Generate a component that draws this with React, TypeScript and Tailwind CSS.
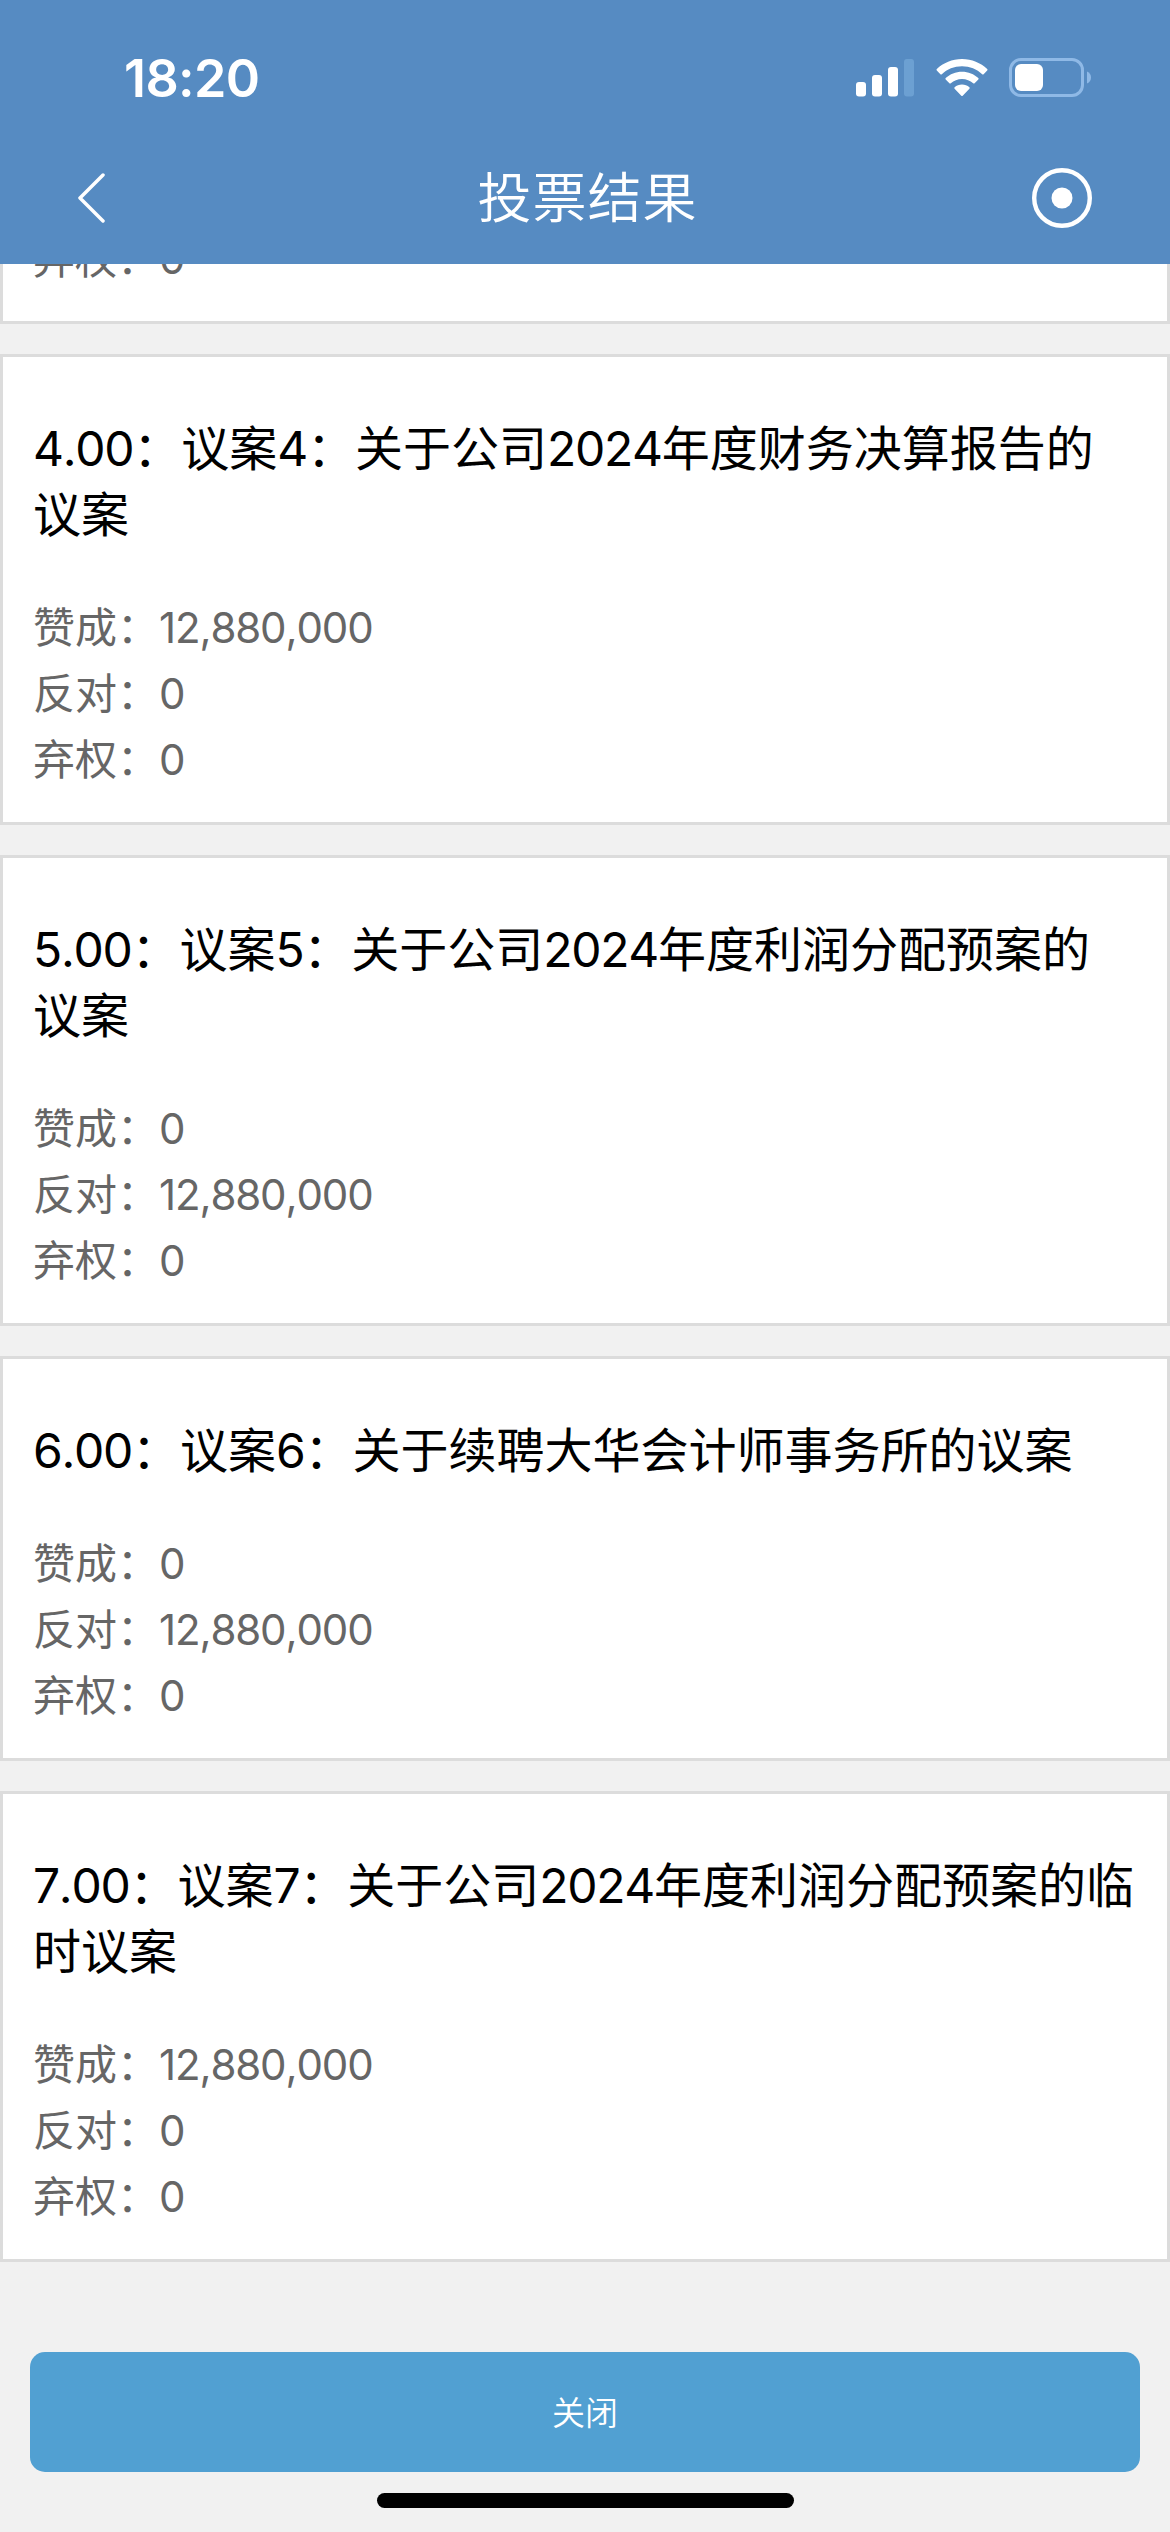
interface Proposal {
  no: string;
  index: string;
  // the title is broken into lines where it wraps on the device
  title: string;
  agree: string;
  against: string;
  abstain: string;
}

const proposals: Proposal[] = [
  {
    no: "4.00",
    index: "4",
    title: "关于公司2024年度财务决算报告的\n议案",
    agree: "12,880,000",
    against: "0",
    abstain: "0",
  },
  {
    no: "5.00",
    index: "5",
    title: "关于公司2024年度利润分配预案的\n议案",
    agree: "0",
    against: "12,880,000",
    abstain: "0",
  },
  {
    no: "6.00",
    index: "6",
    title: "关于续聘大华会计师事务所的议案",
    agree: "0",
    against: "12,880,000",
    abstain: "0",
  },
  {
    no: "7.00",
    index: "7",
    title: "关于公司2024年度利润分配预案的临\n时议案",
    agree: "12,880,000",
    against: "0",
    abstain: "0",
  },
];

function StatusBar() {
  return (
    <div className="flex h-[132px] items-start justify-between pt-[58px] pr-[78px] pl-[124px] text-white">
      <span className="font-['Inter',sans-serif] text-[52px] leading-[41px] font-semibold tracking-[-0.6px]">
        18:20
      </span>
      <div className="flex items-start">
        <svg width="58" height="40" viewBox="0 0 58 40" fill="currentColor">
          <rect x="0" y="24" width="10" height="14.5" rx="3" />
          <rect x="16" y="17" width="10" height="21.5" rx="3" />
          <rect x="32" y="9" width="10" height="29.5" rx="3" />
          <rect x="48" y="1" width="10" height="37.5" rx="3" fill="#8fc0ea" opacity="0.4" />
        </svg>
        <svg className="ml-[22px]" width="52" height="40" viewBox="0 0 52 40" fill="currentColor">
          <path d="M26 1C35.800 1 44.700 4.800 51.200 11.100Q51.900 11.800 51.200 12.500L47.600 16.200Q46.900 16.900 46.200 16.200C40.900 11.200 33.800 8.300 26 8.300S11.100 11.200 5.800 16.200Q5.100 16.900 4.400 16.200L0.800 12.500Q0.100 11.800 0.800 11.100C7.300 4.800 16.200 1 26 1Z" />
          <path d="M26 13.800C32.300 13.800 38 16.200 42.300 20.100Q43 20.800 42.300 21.500L38.600 25.200Q37.900 25.900 37.200 25.300C34.200 22.600 30.300 21 26 21S17.800 22.600 14.800 25.300Q14.100 25.900 13.400 25.200L9.700 21.500Q9 20.800 9.700 20.100C14 16.200 19.700 13.800 26 13.800Z" />
          <path d="M26 26.600C28.800 26.600 31.400 27.600 33.400 29.300Q34.100 30 33.400 30.700L26.700 37.700Q26 38.400 25.300 37.700L18.600 30.700Q17.900 30 18.600 29.300C20.600 27.600 23.200 26.600 26 26.600Z" />
        </svg>
        <svg className="ml-[21px]" width="83" height="40" viewBox="0 0 83 40">
          <rect x="1.500" y="1.500" width="72" height="36" rx="10.500" fill="none" stroke="#8fb9e6" strokeWidth="3" />
          <rect x="6" y="6" width="28" height="27" rx="6" fill="#fff" />
          <path d="M78 13.500C80.800 14.600 82 16.800 82 19.500S80.800 24.400 78 25.500Z" fill="#8fb9e6" />
        </svg>
      </div>
    </div>
  );
}

function NavBar() {
  return (
    <div className="flex h-[132px] items-center justify-between pr-[78px] pl-[77px] text-white">
      <svg width="60" height="50" viewBox="0 0 60 50" fill="none">
        <path d="M26 2L3 25L26 48" stroke="currentColor" strokeWidth="3.500" strokeLinecap="round" strokeLinejoin="round" />
      </svg>
      <h1 className="pb-[6px] pl-[6px] text-[54px] leading-[60px] font-[350] tracking-[1px]">投票结果</h1>
      <svg width="60" height="60" viewBox="0 0 60 60">
        <circle cx="30" cy="30" r="27.800" fill="none" stroke="currentColor" strokeWidth="4.400" />
        <circle cx="30" cy="30" r="10.500" fill="currentColor" />
      </svg>
    </div>
  );
}

// Latin digits sit a little tighter than the Chinese text around them
function Digits({ children }: { children: string }) {
  return (
    <span className="font-['Inter',sans-serif] leading-none tracking-[-0.027em] [font-kerning:none]">
      {children}
    </span>
  );
}

function Title({ text }: { text: string }) {
  return (
    <>
      {text.split(/(\d+)/).map((part, i) =>
        /^\d+$/.test(part) ? <Digits key={i}>{part}</Digits> : part
      )}
    </>
  );
}

function Row({ label, value }: { label: string; value: string }) {
  return (
    <p className="h-[66px] shrink-0 text-[42px] leading-[62px] text-[#666]">
      {label}：<Digits>{value}</Digits>
    </p>
  );
}

function ProposalCard({ item }: { item: Proposal }) {
  return (
    <section className="border-[3px] border-[#dcdcdc] bg-white px-[30px] pt-[55px] pb-[30px]">
      <h2 className="mb-[50px] text-[48px] leading-[66px] whitespace-pre text-black">
        <Digits>{item.no}</Digits>：议案<Digits>{item.index}</Digits>：
        <Title text={item.title} />
      </h2>
      <Row label="赞成" value={item.agree} />
      <Row label="反对" value={item.against} />
      <Row label="弃权" value={item.abstain} />
    </section>
  );
}

export default function App() {
  return (
    <div className="flex h-[2532px] w-[1170px] flex-col overflow-hidden bg-[#f1f1f1] font-['Noto_Sans_CJK_SC',sans-serif]">
      <header className="h-[264px] shrink-0 bg-[#568bc2]">
        <StatusBar />
        <NavBar />
      </header>

      <main className="flex flex-col gap-[30px]">
        {/* previous card, scrolled under the header */}
        <section className="flex h-[60px] flex-col justify-end overflow-hidden border-[3px] border-t-0 border-[#dcdcdc] bg-white px-[30px] pb-[30px]">
          <Row label="弃权" value="0" />
        </section>
        {proposals.map((item) => (
          <ProposalCard key={item.no} item={item} />
        ))}
      </main>

      <footer className="flex flex-col items-center px-[30px] pt-[90px]">
        <button className="h-[120px] w-full rounded-[15px] bg-[#51a0d2] text-[33px] font-[350] text-white">
          关闭
        </button>
        <div className="mt-[21px] h-[15px] w-[417px] rounded-full bg-black" />
      </footer>
    </div>
  );
}
